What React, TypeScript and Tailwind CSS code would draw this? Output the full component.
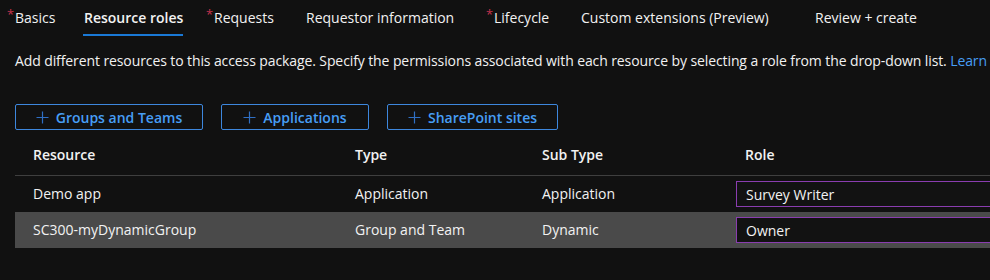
import React from 'react';

const tabs = [
  { label: 'Basics', req: true, w: 'w-[77px]' },
  { label: 'Resource roles', active: true, w: 'w-[122px]' },
  { label: 'Requests', req: true, w: 'w-[100px]' },
  { label: 'Requestor information', w: 'w-[180px]' },
  { label: 'Lifecycle', req: true, w: 'w-[95px]' },
  { label: 'Custom extensions (Preview)', w: 'w-[234px]' },
  { label: 'Review + create', w: 'w-[140px]' },
];

const buttons = [
  { label: 'Groups and Teams', w: 'w-[188px]' },
  { label: 'Applications', w: 'w-[148px]' },
  { label: 'SharePoint sites', w: 'w-[171px]' },
];

const rows = [
  { resource: 'Demo app', type: 'Application', subType: 'Application', role: 'Survey Writer' },
  { resource: 'SC300-myDynamicGroup', type: 'Group and Team', subType: 'Dynamic', role: 'Owner', selected: true },
];

function Plus() {
  return (
    <svg width="13" height="13" viewBox="0 0 13 13" className="shrink-0">
      <path d="M6.5 0.5v12M0.5 6.5h12" stroke="#2f6fc4" strokeWidth="1.2" fill="none" />
    </svg>
  );
}

export default function App() {
  return (
    <div
      className="w-[990px] h-[280px] overflow-hidden bg-[#111111] text-[#f2f2f2] text-[14px]"
      style={{ fontFamily: '"Open Sans", "Noto Sans", sans-serif' }}
    >
      {/* tab strip */}
      <div className="flex pl-[7px] h-[36px] whitespace-nowrap">
        {tabs.map((t) => (
          <div key={t.label} className={`${t.w} shrink-0 relative flex items-start pt-[7px]`}>
            {t.req ? <span className="text-[#c4314b] text-[13px] leading-[14px] w-[8px]">*</span> : null}
            <span className={`relative leading-[22px] ${t.active ? 'font-semibold' : ''}`}>
              {t.label}
              {t.active ? (
                <span className="absolute left-[-1px] right-0 top-[27px] h-[2px] bg-[#1a79d6]" />
              ) : null}
            </span>
          </div>
        ))}
      </div>

      {/* description */}
      <div className="pl-[15px] mt-[14px] leading-[22px] whitespace-nowrap tracking-[-0.1px]">
        Add different resources to this access package. Specify the permissions associated with each resource by
        selecting a role from the drop-down list. <span className="text-[#479ef5]">Learn more</span>
      </div>

      {/* add buttons */}
      <div className="flex gap-[18px] pl-[15px] mt-[32px]">
        {buttons.map((b) => (
          <button
            key={b.label}
            className={`${b.w} h-[26px] flex items-center justify-center gap-[7px] border border-[#3d87dd] rounded-[2px] text-[#479ef5] font-semibold`}
          >
            <Plus />
            <span>{b.label}</span>
          </button>
        ))}
      </div>

      {/* table */}
      <div className="ml-[15px]">
        <div className="flex h-[46px] items-end pb-[10px] border-b border-[#3f3f3f] font-semibold">
          <div className="w-[322px] shrink-0 pl-[18px]">Resource</div>
          <div className="w-[187px] shrink-0 pl-[18px]">Type</div>
          <div className="w-[194px] shrink-0 pl-[18px]">Sub Type</div>
          <div className="flex-1 pl-[27px]">Role</div>
        </div>
        {rows.map((r) => (
          <div key={r.resource} className={`flex h-[36px] items-center ${r.selected ? 'bg-[#4a4a4a]' : ''}`}>
            <div className="w-[322px] shrink-0 pl-[18px] pb-[2px]">{r.resource}</div>
            <div className="w-[187px] shrink-0 pl-[18px] pb-[2px]">{r.type}</div>
            <div className="w-[194px] shrink-0 pl-[18px] pb-[2px]">{r.subType}</div>
            <div className="shrink-0 pl-[18px]">
              <div className="h-[26px] w-[300px] border border-[#8a3db0] bg-[#121212] flex items-center pl-[9px]">
                {r.role}
              </div>
            </div>
          </div>
        ))}
      </div>
    </div>
  );
}
